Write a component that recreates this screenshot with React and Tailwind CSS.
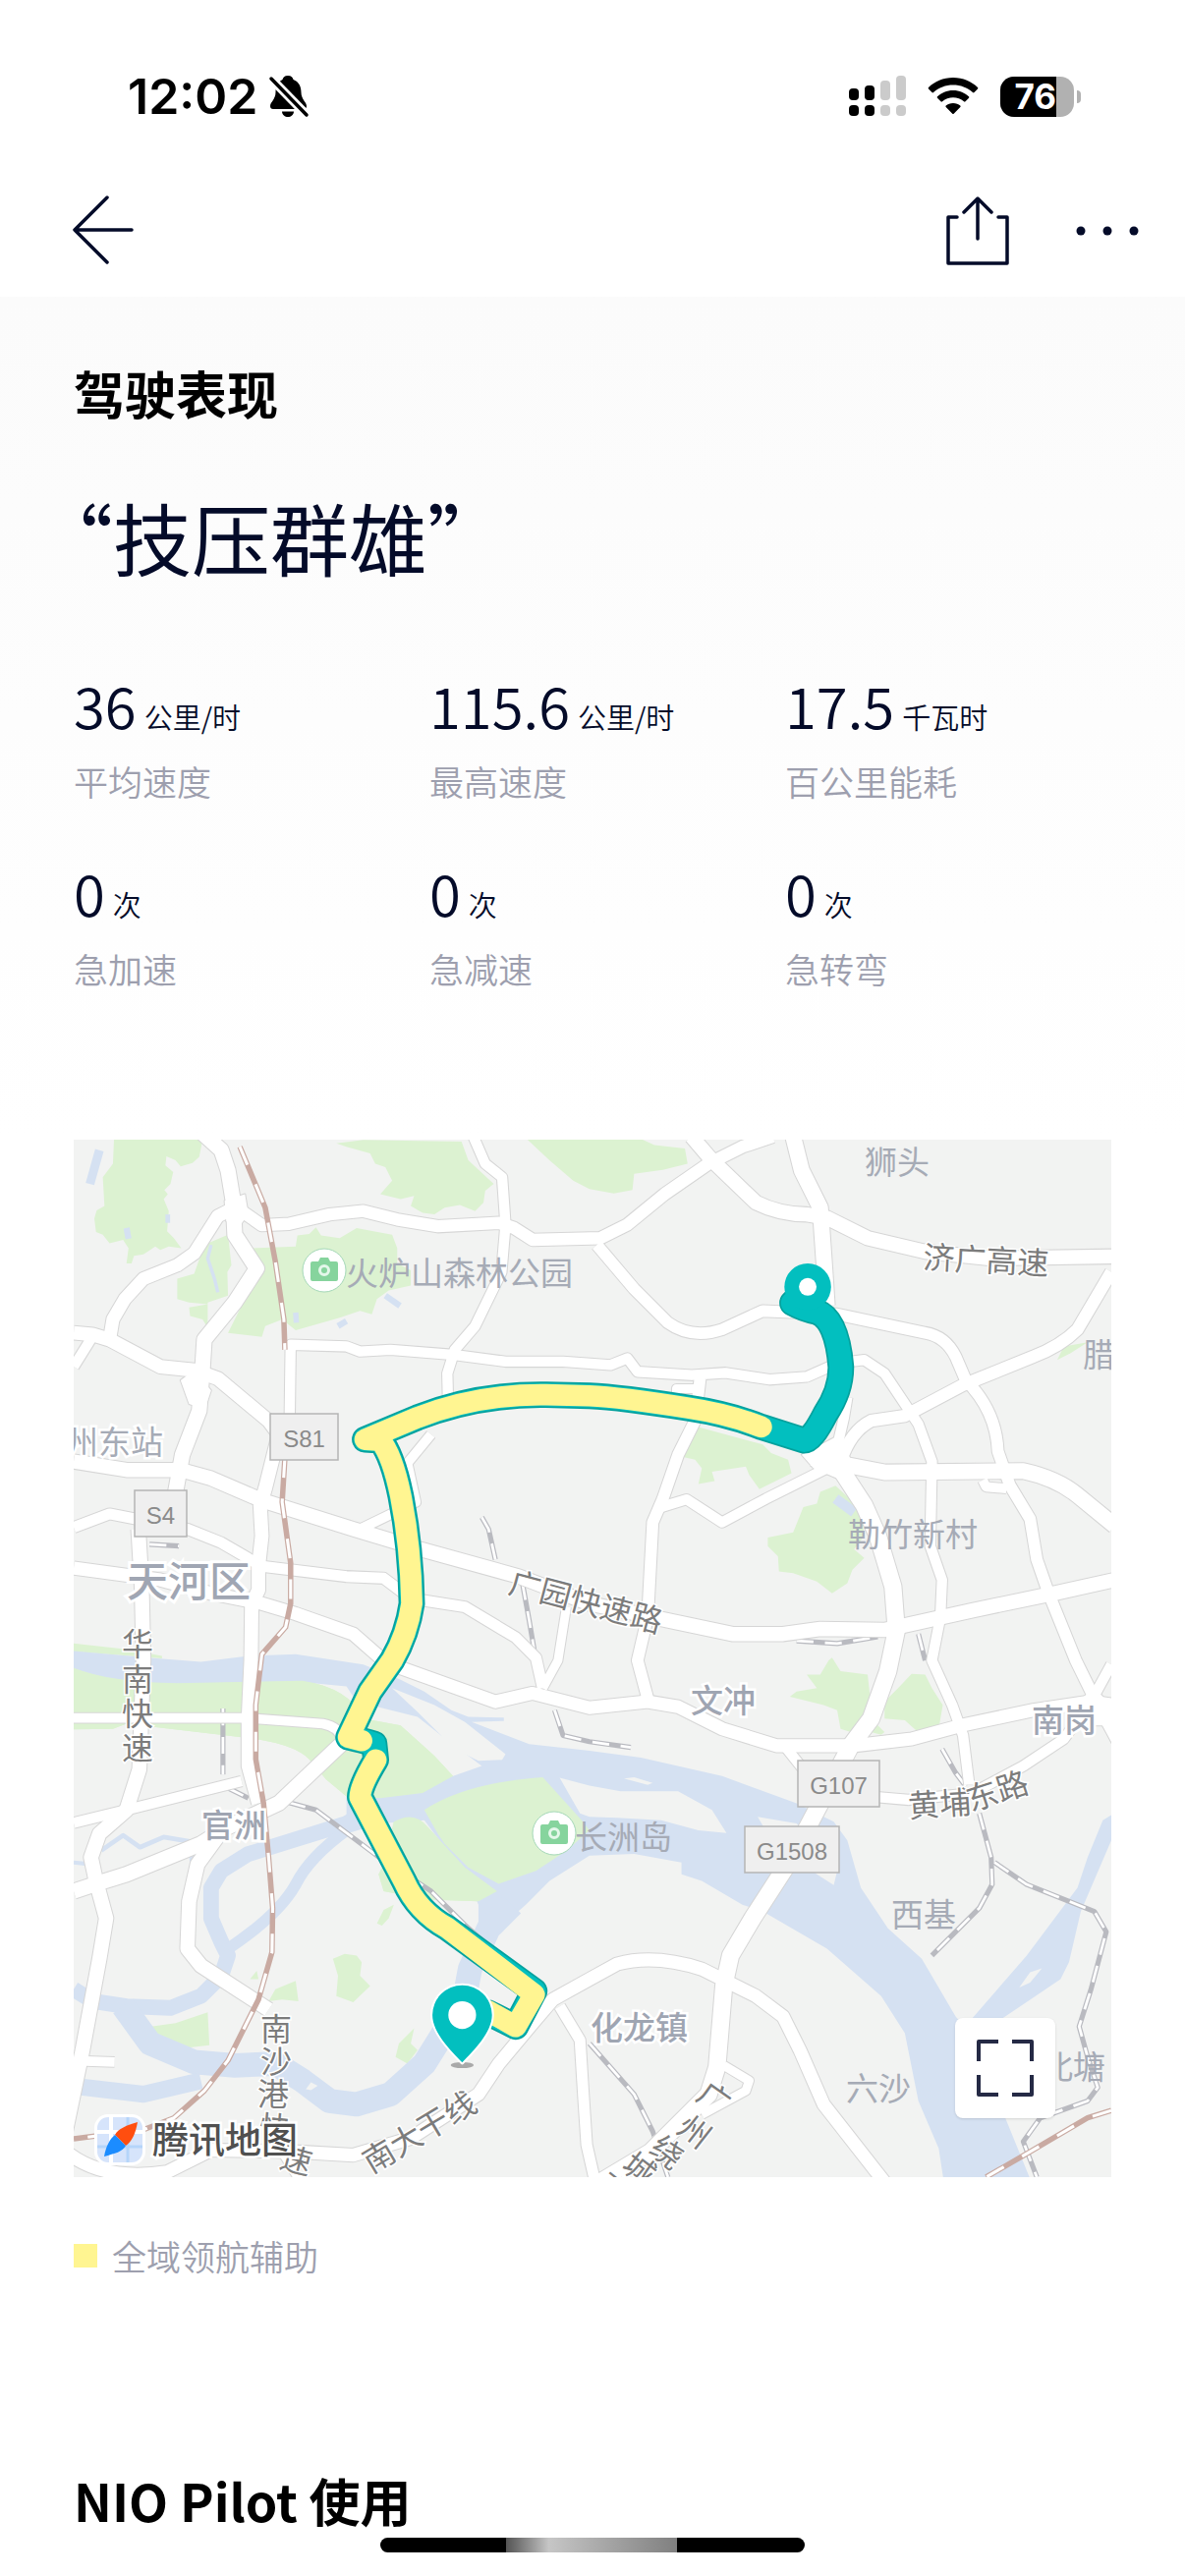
const stats = [
  { label: "平均速度", value: "36", unit: "公里/时" },
  { label: "最高速度", value: "115.6", unit: "公里/时" },
  { label: "百公里能耗", value: "17.5", unit: "千瓦时" },
  { label: "急加速", value: "0", unit: "次" },
  { label: "急减速", value: "0", unit: "次" },
  { label: "急转弯", value: "0", unit: "次" },
];

// Map geometry lives in its own units: the viewport is 3066 x 3066, starting at 44,29
const greens = [
  "M163,29 L425,29 415,80 395,98 360,108 345,90 318,78 315,105 338,125 330,160 312,178 322,190 310,205 325,240 320,300 340,320 362,350 325,345 300,355 285,345 250,368 222,372 215,395 200,395 206,350 190,325 150,335 130,310 110,302 105,262 112,238 135,225 130,140 160,100 Z",
  "M430,340 L500,310 510,400 498,420 500,490 440,510 440,585 425,560 388,550 385,525 440,515 385,510 350,500 350,440 400,425 Z",
  "M500,600 L600,612 610,580 660,560 700,592 830,555 890,535 925,545 940,500 975,475 1040,460 1040,415 1000,395 1000,350 985,310 930,300 880,290 830,320 775,312 760,288 740,308 705,312 700,345 570,350 600,400 Z",
  "M820,40 L900,30 1190,35 1210,90 1285,160 1260,180 1255,215 1230,240 1185,222 1140,230 1110,250 1075,245 1040,225 1050,195 1010,205 950,190 985,150 965,110 935,100 920,70 850,50 Z",
  "M1385,29 L1725,29 1760,45 1850,55 1858,100 1785,118 1700,130 1695,178 1640,188 1568,175 1520,150 1450,90 Z",
  "M1860,870 L2080,930 2105,955 2155,975 2165,1015 2070,1062 2040,1020 2030,995 1930,1010 1938,1038 1890,1047 1900,1000 1880,975 1838,965 Z",
  "M2250,1070 L2295,1052 2370,1120 2380,1200 2350,1240 2380,1265 2345,1300 2330,1340 2285,1370 2240,1335 2170,1310 2128,1305 2125,1260 2095,1230 2095,1205 2170,1190 2200,1115 2240,1105 Z",
  "M2210,1610 L2250,1610 2275,1568 2285,1560 2310,1600 2390,1610 2400,1700 2340,1780 2310,1770 2300,1715 2260,1700 2160,1675 2180,1660 2240,1650 Z",
  "M2440,1690 L2480,1650 2520,1608 2560,1610 2580,1650 2612,1700 2600,1770 2550,1790 2500,1745 2440,1740 Z",
  "M2400,1780 L2415,1755 2440,1780 2430,1788 Z",
  "M44,1518 L200,1535 305,1555 305,1562 44,1542 Z",
  "M44,1590 Q150,1632 350,1635 L720,1628 Q860,1650 900,1740 L1010,1760 1110,1850 1165,1910 1075,1960 950,1975 850,1970 790,1920 740,1860 Q690,1810 540,1795 L200,1755 160,1770 44,1772 Z",
  "M1080,2010 Q1200,1930 1430,1913 L1545,2040 1568,2070 1500,2130 1410,2190 1300,2228 1210,2180 1140,2110 1120,2080 Z",
  "M990,2045 Q1050,2010 1090,2060 L1200,2180 1295,2250 1240,2280 1090,2275 960,2250 945,2200 960,2170 Z",
  "M810,2450 L845,2435 880,2440 895,2460 890,2500 920,2530 870,2578 820,2560 825,2500 Z",
  "M272,2650 L345,2640 440,2608 445,2705 360,2715 290,2680 Z",
  "M620,2575 L640,2540 700,2515 708,2575 660,2570 Z",
  "M995,2740 L1005,2700 1050,2655 1040,2700 1060,2720 1030,2760 Z",
  "M940,2345 L960,2305 990,2290 975,2330 955,2352 Z",
  "M565,2510 L585,2485 590,2510 Z",
  "M2950,680 L2970,640 3040,628 2990,660 Z",
];

const rivers = [
  "M44,1540 L290,1562 420,1572 560,1555 700,1550 900,1580 1010,1625 1080,1660 1160,1715 1210,1735 1315,1737 1315,1747 1220,1750 1390,1815 1568,1835 1720,1855 1960,1910 2180,1990 2290,2045 2330,2100 2370,2240 2450,2360 2550,2450 2650,2620 2720,2700 2798,2923 2868,3095 2613,3095 2600,3010 2540,2870 2500,2670 2430,2560 2270,2420 2080,2310 2020,2290 1900,2220 1840,2200 1840,2165 1700,2140 1568,2145 1450,2220 1380,2290 1300,2360 1240,2380 1240,2290 1200,2200 1080,2040 950,2050 850,2080 850,1970 940,1960 1165,1910 1250,1880 1130,1790 1060,1735 880,1690 850,1645 700,1630 350,1637 180,1635 44,1592 Z",
  "M3110,2025 L3085,2040 3040,2150 3010,2240 2860,2440 2700,2625 2690,2700 2790,2625 2960,2510 2985,2460 3020,2310 3110,2100 Z",
];

const streams = [
  { d: "M950,1990 L850,2050 690,2100 560,2140 480,2190 450,2240 450,2330 480,2400 500,2440 480,2500 420,2560 330,2595 200,2590 100,2575 44,2540", w: 46 },
  { d: "M850,2070 Q740,2150 700,2230 Q650,2320 500,2420", w: 34 },
  { d: "M190,2590 L270,2700 400,2755 520,2765 640,2760 720,2810 800,2870 880,2880 980,2850 1080,2760 1130,2680 1200,2560 1215,2480 1270,2360 1340,2290", w: 72 },
  { d: "M60,2828 L250,2850 420,2810", w: 50 },
  { d: "M125,2130 L190,2085 240,2120 310,2090 400,2105", w: 14 },
  { d: "M395,2140 L402,2190", w: 22 },
  { d: "M44,2165 L90,2170", w: 12 },
  { d: "M120,60 L92,160", w: 26 },
  { d: "M450,340 L440,380 460,440 470,480", w: 10 },
  { d: "M965,490 L1008,520", w: 18 },
  { d: "M825,580 L850,565", w: 18 },
  { d: "M200,290 L206,322", w: 18 },
  { d: "M322,250 L322,275", w: 14 },
  { d: "M700,540 L702,570", w: 16 },
  { d: "M2295,1090 L2350,1130", w: 30 },
];

const islands = [
  "M985,1650 L1110,1700 1200,1750 1320,1845 1310,1862 1240,1865 1150,1820 1130,1790 1060,1720 Z",
  "M1480,1915 L1568,1938 1660,1955 1830,1955 1930,2010 1973,2078 1890,2070 1780,2040 1650,2033 1568,2030 1540,2020 Z",
  "M1670,1917 L1700,1913 1755,1930 1740,1936 Z",
  "M2065,2030 L2180,2050 2300,2190 2290,2232 2240,2200 2100,2090 Z",
  "M2838,2535 L2870,2490 2905,2478 2870,2520 Z",
  "M730,2835 L745,2815 765,2825 745,2838 Z",
];

const roads = [
  { w: 28, d: "M80,2752 L165,2755" },
  { w: 30, d: "M44,700 L100,610" },
  { w: 28, d: "M1100,900 L1030,985 1055,1100 890,1180" },
  { w: 38, d: "M500,240 L470,255 400,365 350,400 250,440 195,500 160,560 150,620" },
  { w: 36, d: "M540,240 L600,282 680,278 800,250 900,240 1000,265 1120,285 1300,275 1345,290 1400,325 1600,320 1680,280 1790,190 1920,100 2020,50 2110,20" },
  { w: 30, d: "M1225,20 L1260,100 1310,140 1320,280 1308,420 1230,580 1170,650 1148,720 1150,800" },
  { w: 30, d: "M682,860 L685,635 850,640 890,655 980,650 1170,665 1320,685 1490,685 1630,695 1680,675 1710,715 1870,725 1970,718 2100,738 2210,730 2300,690 2380,680 2440,720 2540,870 2580,980 2575,1230 2610,1330 2605,1440 2580,1568 2640,1700 2672,1790 2690,1935" },
  { w: 34, d: "M1895,735 L1880,860 1830,960 1785,1090 1755,1160 1740,1440 1710,1568 1740,1680" },
  { w: 26, d: "M1880,765 L1825,765 1825,800" },
  { w: 30, d: "M1780,1115 L1855,1092 1960,1160 2090,1090 2270,1000" },
  { w: 34, d: "M1590,340 L1700,470 1800,570 Q1870,620 1960,590 L2080,535 2300,545 2560,600 Q2620,610 2650,670 L2680,740 Q2770,830 2775,950 L2810,1050 2870,1150 2890,1270 2925,1370 3005,1568 3060,1680 3130,1810" },
  { w: 36, d: "M3110,420 L3010,590 Q2960,640 2880,670 L2670,755 2500,845 2400,860 Q2340,890 2310,980" },
  { w: 28, d: "M2730,1035 L2740,1055 2800,1060" },
  { w: 46, d: "M2225,970 L2300,985 2440,1012 2850,1008 Q2950,1030 3010,1080 L3120,1170" },
  { w: 46, d: "M2170,20 L2195,120 2250,230 2262,400 2270,520" },
  { w: 30, d: "M2330,790 L2320,850 2290,980" },
  { w: 42, d: "M1870,20 L1930,90 2060,215 Q2130,250 2210,250 L2270,260 2390,320 2560,360 2750,380 3120,374" },
  { w: 50, d: "M2295,980 L2380,1110 2420,1200 2465,1350 2475,1480 2450,1600 2400,1740 2340,1820 2250,1990 2160,2160 2050,2330 1985,2440 1965,2530 1945,2770 1920,2850 1750,3020 1600,3110" },
  { w: 26, d: "M1965,2765 L2040,2810 2030,2840 1900,2910" },
  { w: 42, d: "M44,980 L200,1005 360,1005 450,1030 600,1095 870,1180 1070,1240 1360,1320 1568,1400 1800,1450 1990,1490 2140,1490 2250,1475 2440,1478 2520,1460 2700,1420 2940,1370 3120,1330" },
  { w: 32, d: "M44,1175 L150,1135 380,1180 480,1220 600,1290 850,1320 960,1325 1040,1385 1200,1410 1350,1500 1410,1560 1430,1650" },
  { w: 38, d: "M44,1295 L300,1330 450,1370 600,1400 700,1430 870,1490 950,1560 1010,1590 1290,1690 1400,1665 1568,1708 1740,1690 1830,1705 1960,1770 2120,1820 2350,1820 2520,1800 2668,1760 2880,1715 3050,1690 3120,1700" },
  { w: 26, d: "M1500,1410 L1475,1568 1430,1650" },
  { w: 40, d: "M44,600 L100,605 150,620 300,700 400,710 470,735 620,860 650,900 610,1060 595,1110 600,1200 590,1290 590,1360 570,1400 568,1568 560,1740 560,1880 590,1990" },
  { w: 44, d: "M425,10 L480,60 500,120 515,210 520,310 585,410 520,510 430,620 425,700 415,830 365,960 345,1070" },
  { w: 28, d: "M44,1738 L550,1738 780,1755 Q830,1765 835,1800" },
  { w: 30, d: "M44,2048 L200,2010 540,1925" },
  { w: 42, d: "M235,1180 L245,1350 250,1568 238,1890 200,2010 120,2080 95,2150 110,2220 140,2330 120,2450 70,2720 20,2960" },
  { w: 44, d: "M44,2250 L120,2225 200,2200 420,2110 500,2060 650,1990 840,1810" },
  { w: 42, d: "M490,2060 L410,2170 385,2280 380,2420 420,2470 620,2600" },
  { w: 38, d: "M10,3010 Q120,3110 320,3080 L450,3015 700,3020 870,3030 1040,2980 1240,2850 1300,2760 1400,2640 1460,2570 1568,2510 1650,2465 Q1760,2435 1900,2480 L2060,2560 2140,2620 2190,2720 2260,2880 2440,3110" },
  { w: 32, d: "M1480,2590 L1540,2690 1550,2850 1560,3000 1585,3110" },
  { w: 30, d: "M2140,1815 L2200,1890 2280,1960 2510,1980 2700,1960 2850,1880 2970,1800 3050,1690 3110,1580" },
  { w: 26, d: "M660,3020 L715,3110" },
];

// Blobs of white where the big interchanges merge
const junctions = [
  "M400,710 L450,770 440,800 415,820 385,810 360,740 Z",
  "M2195,960 L2310,900 2350,1000 2300,1030 2230,1000 Z",
  "M490,210 L550,190 560,250 530,290 495,270 Z",
  "M3010,1690 L3060,1650 3110,1700 3110,1760 3060,1760 Z",
];

const brownRails = [
  "M535,50 L610,230 640,390 665,560 668,650",
  "M668,970 L660,1100 685,1280 685,1400 670,1470 600,1550 582,1700 582,1860 605,1990 620,2150 632,2300 630,2430 590,2570 500,2750 430,2840 340,2920 250,2955 44,2982",
  "M3110,2898 L3040,2920 2870,3020 2740,3095",
];

const greyRails = [
  "M1250,1145 L1270,1180 1290,1270",
  "M1370,1340 L1390,1450 1410,1568",
  "M1465,1715 L1490,1790 1568,1808 1690,1825",
  "M485,1710 L485,1905",
  "M500,1945 L560,1975",
  "M680,1988 L760,2010 940,2145 1100,2250 1200,2350 1290,2430",
  "M2720,2020 L2755,2150 2758,2230 2720,2300 2580,2440",
  "M2765,2165 L2860,2230 3060,2310 3095,2370 3050,2540 3015,2650 3040,2740 3070,2830 3040,2870 2900,2920 2850,2990 2890,3095",
  "M1568,2700 L1700,2850 1755,2960 1800,3095",
  "M2610,1830 L2650,1900 2680,1940",
  "M2180,1510 L2300,1518 2420,1498",
  "M2540,1490 L2560,1568",
  "M268,1225 L355,1230",
];

const driven =
  "M2200,480 L2168,512 Q2200,530 2240,538 Q2300,560 2311,700 Q2312,770 2265,840 Q2225,918 2203,918 L2076,878 Q1980,840 1860,822 Q1660,790 1568,786 L1440,783 Q1240,780 1060,850 L905,915 L950,918 Q985,960 1010,1080 Q1040,1230 1043,1400 Q1030,1490 985,1568 L920,1660 L856,1795 Q900,1805 932,1815 L937,1862 Q890,1940 890,1972 L1020,2220 Q1060,2310 1150,2360 L1405,2545 L1350,2650 L1270,2610";

const pilotParts = [
  "M2076,878 Q1980,840 1860,822 Q1660,790 1568,786 L1440,783 Q1240,780 1060,850 L905,915 L950,918 Q985,960 1010,1080 Q1040,1230 1043,1400 Q1030,1490 985,1568 L920,1660 L856,1795 L895,1805",
  "M937,1862 Q890,1940 890,1972 L1020,2220 Q1060,2310 1150,2360 L1405,2555 L1350,2650 L1270,2605",
];

// Label positions are in map pixels (1056 wide)
const places = [
  { t: "火炉山森林公园", x: 277, y: 148 },
  { t: "狮头", x: 805, y: 35 },
  { t: "腊", x: 1027, y: 231 },
  { t: "州东站", x: -8, y: 320, halo: true },
  { t: "勒竹新村", x: 788, y: 414 },
  { t: "长洲岛", x: 510, y: 722 },
  { t: "西基", x: 832, y: 801 },
  { t: "六沙", x: 786, y: 978 },
  { t: "北塘", x: 984, y: 956 },
  { t: "文冲", x: 628, y: 583, halo: true, bold: true },
  { t: "南岗", x: 975, y: 603, halo: true, bold: true },
  { t: "官洲", x: 130, y: 710, halo: true, bold: true },
  { t: "化龙镇", x: 526, y: 916, halo: true, bold: true },
];

const roadNames = [
  { t: "济广高速", x: 864, y: 131, r: 3 },
  { t: "广园快速路", x: 441, y: 461, r: 15 },
  { t: "黄埔", x: 850, y: 690, r: -4 },
  { t: "东路", x: 913, y: 684, r: -18 },
  { t: "南大干线", x: 303, y: 1053, r: -31 },
  { t: "华", x: 49, y: 525 },
  { t: "南", x: 49, y: 561 },
  { t: "快", x: 49, y: 596 },
  { t: "速", x: 49, y: 631 },
  { t: "南", x: 190, y: 917 },
  { t: "沙", x: 190, y: 950 },
  { t: "港", x: 187, y: 983 },
  { t: "快", x: 188, y: 1016, r: 5 },
  { t: "速", x: 208, y: 1046, r: 15 },
  { t: "广", x: 632, y: 976, r: 35 },
  { t: "州", x: 612, y: 1009, r: 38 },
  { t: "绕", x: 584, y: 1030, r: 38 },
  { t: "城", x: 556, y: 1047, r: 38 },
  { t: "高", x: 530, y: 1068, r: 38 },
];

const shields = [
  { t: "S81", x: 200, y: 279, w: 69 },
  { t: "S4", x: 62, y: 357, w: 53 },
  { t: "G107", x: 737, y: 632, w: 83 },
  { t: "G1508", x: 683, y: 699, w: 96 },
];

function StatusBar() {
  return (
    <div className="flex h-[166px] items-center justify-between pt-[30px] pr-[106px] pl-[130px]">
      <div className="flex items-center gap-[11px]">
        <span className="font-['Inter'] text-[50px] leading-[60px] font-semibold text-black">12:02</span>
        <svg className="h-[44px] w-[42px]" viewBox="0 0 42 44" aria-hidden="true">
          <path d="M20 1C23.500 1 25 3 25.500 5C31 7 33.500 12 33.500 18C33.500 25 39 28 39 32C39 34 38 35 36 35H5C3 35 2 34 2 32C2 28 7.500 25 7.500 18C7.500 12 10 7 14.500 5C15 3 16.500 1 20 1Z" />
          <path d="M14 37.500H26C26 41 23 43 20 43S14 41 14 37.500Z" />
          <path d="M2 3L40 42" stroke="#fff" strokeWidth="9" />
          <path d="M3 4L39 41" stroke="#000" strokeWidth="3.500" strokeLinecap="round" />
        </svg>
      </div>
      <div className="flex items-center">
        <svg className="mr-[22px] h-[42px] w-[58px]" viewBox="0 0 58 42" aria-hidden="true">
          <rect x="0" y="13" width="10" height="12" rx="4" />
          <rect x="16" y="10" width="10" height="15" rx="4" />
          <rect x="0" y="30" width="10" height="11" rx="4" />
          <rect x="16" y="30" width="10" height="11" rx="4" />
          <g fill="#cbcbcb">
            <rect x="32" y="5" width="10" height="20" rx="4" />
            <rect x="48" y="0" width="10" height="25" rx="4" />
            <rect x="32" y="30" width="10" height="11" rx="4" />
            <rect x="48" y="30" width="10" height="11" rx="4" />
          </g>
        </svg>
        <svg className="mr-[22px] h-[38px] w-[52px]" viewBox="0 0 52 38" aria-hidden="true">
          <path d="M26 0C36 0 45 4 51 10C51.500 10.500 51.500 11 51 11.500L47.500 15C47 15.500 46.500 15.500 46 15C40.500 10 33.500 7.500 26 7.500S11.500 10 6 15C5.500 15.500 5 15.500 4.500 15L1 11.500C.5 11 .5 10.500 1 10C7 4 16 0 26 0Z" />
          <path d="M26 13C32.500 13 38 15.500 42 19.300C42.500 19.800 42.500 20.300 42 20.800L38.500 24.300C38 24.800 37.500 24.800 37 24.300C34 21.700 30 20.300 26 20.300S18 21.700 15 24.300C14.500 24.800 14 24.800 13.500 24.300L10 20.800C9.500 20.300 9.500 19.800 10 19.300C14 15.500 19.500 13 26 13Z" />
          <path d="M26 26C29 26 31.500 27 33.300 28.500C33.800 29 33.800 29.500 33.300 30L26.700 36.700C26.300 37.100 25.700 37.100 25.300 36.700L18.700 30C18.200 29.500 18.200 29 18.700 28.500C20.500 27 23 26 26 26Z" />
        </svg>
        <div className="h-[41px] w-[75px] overflow-hidden rounded-[14px] bg-[#b1b1b1]">
          <div className="flex h-full w-[57px] items-center justify-end bg-black font-['Inter'] text-[35px] leading-[41px] font-bold text-white">
            76
          </div>
        </div>
        <div className="ml-[3px] h-[13px] w-[4px] rounded-r-full bg-[#b1b1b1]" />
      </div>
    </div>
  );
}

function TopNav() {
  return (
    <header className="flex h-[136px] items-center justify-between pr-[46px] pl-[73px]">
      <button type="button" aria-label="返回">
        <svg className="h-[70px] w-[64px]" viewBox="0 0 64 70" fill="none" stroke="#040b29" strokeWidth="3.500" strokeLinecap="round" strokeLinejoin="round">
          <path d="M36 2L3 35L36 68M3 35H61" />
        </svg>
      </button>
      <div className="flex items-center gap-[66px]">
        <button type="button" aria-label="分享">
          <svg className="h-[72px] w-[66px]" viewBox="0 0 66 72" fill="none" stroke="#040b29" strokeWidth="3.500" strokeLinecap="round" strokeLinejoin="round">
            <path d="M12 23H3V70H63V23H54M33 4V45M19 18L33 4L47 18" />
          </svg>
        </button>
        <button type="button" aria-label="更多">
          <svg className="h-[40px] w-[66px]" viewBox="0 0 66 40" fill="#040b29">
            <circle cx="6" cy="21" r="4.500" />
            <circle cx="33" cy="21" r="4.500" />
            <circle cx="60" cy="21" r="4.500" />
          </svg>
        </button>
      </div>
    </header>
  );
}

function Stat({ value, unit, label }) {
  return (
    <div>
      <dd className="flex h-[60px] items-baseline gap-[8px] leading-[60px] text-[#040b29]">
        <span className="text-[58px] font-[350]">{value}</span>
        <span className="text-[29px] font-[350]">{unit}</span>
      </dd>
      <dt className="mt-[26px] text-[35px] leading-[44px] font-[350] text-[#9d9fae]">{label}</dt>
    </div>
  );
}

function CameraPin({ x, y }) {
  return (
    <g transform={`translate(${x} ${y})`}>
      <circle r="22" fill="#fff" stroke="#a5d8b8" strokeWidth="1" />
      <path d="M-14 -7Q-14 -9 -12 -9H-6L-4 -13H4L6 -9H12Q14 -9 14 -7V9Q14 11 12 11H-12Q-14 11 -14 9Z" fill="#86d49d" />
      <circle r="4.500" fill="none" stroke="#e4f7ea" strokeWidth="3" />
    </g>
  );
}

function RouteMap() {
  return (
    <svg className="block w-full" viewBox="0 0 1056 1056" role="img" aria-label="行程地图">
      <rect width="1056" height="1056" fill="#f2f3f2" />
      <g transform="scale(.34442) translate(-44 -29)" fill="none" strokeLinejoin="round">
        <g fill="#dcf2d1">
          {greens.map((d) => <path key={d} d={d} />)}
        </g>
        <g fill="#d5e1f2">
          {rivers.map((d) => <path key={d} d={d} />)}
        </g>
        <g stroke="#d5e1f2">
          {streams.map((s) => <path key={s.d} d={s.d} strokeWidth={s.w} />)}
        </g>
        <g fill="#f2f3f2">
          {islands.map((d) => <path key={d} d={d} />)}
        </g>
        {/* the island parks and the belt sit on top of the river shape */}
        <g fill="#dcf2d1">
          {greens.slice(11, 14).map((d) => <path key={d} d={d} />)}
        </g>
        <g stroke="#b9bac0" strokeWidth="15">
          {greyRails.map((d) => <path key={d} d={d} />)}
        </g>
        <g stroke="#fff" strokeWidth="8" strokeDasharray="50 34">
          {greyRails.map((d) => <path key={d} d={d} />)}
        </g>
        <g stroke="#d6d6d6">
          {roads.map((r) => <path key={r.d} d={r.d} strokeWidth={r.w + 6} />)}
          {junctions.map((d) => <path key={d} d={d} strokeWidth="6" />)}
        </g>
        <g stroke="#fff">
          {roads.map((r) => <path key={r.d} d={r.d} strokeWidth={r.w} />)}
        </g>
        <g fill="#fff">
          {junctions.map((d) => <path key={d} d={d} />)}
        </g>
        <g stroke="#c9aaa2" strokeWidth="16">
          {brownRails.map((d) => <path key={d} d={d} />)}
        </g>
        <g stroke="#fff" strokeWidth="9" strokeDasharray="58 62">
          {brownRails.map((d) => <path key={d} d={d} />)}
        </g>
      </g>

      <g fontFamily="'Noto Sans CJK SC', sans-serif">
        {places.map((p) => (
          <text
            key={p.t}
            x={p.x}
            y={p.y}
            fontSize="33"
            fontWeight={p.bold ? 500 : 400}
            fill={p.bold ? "#9fa5b2" : "#a6abb6"}
            stroke={p.halo ? "#fff" : "none"}
            strokeWidth="5"
            paintOrder="stroke"
          >
            {p.t}
          </text>
        ))}
        <text x="54" y="465" fontSize="42" fontWeight="500" fill="#a0a6b3" stroke="#fff" strokeWidth="6" paintOrder="stroke">
          天河区
        </text>
        {roadNames.map((n) => (
          <text
            key={`${n.t}${n.x}${n.y}`}
            fontSize="32"
            fill="#7c7c7c"
            stroke="#fff"
            strokeWidth="3"
            paintOrder="stroke"
            transform={`translate(${n.x} ${n.y}) rotate(${n.r || 0})`}
          >
            {n.t}
          </text>
        ))}
      </g>

      <g transform="scale(.34442) translate(-44 -29)" fill="none" strokeLinejoin="round" strokeLinecap="round">
        <path d={driven} stroke="#04a19d" strokeWidth="78" />
        <path d={driven} stroke="#02bfbf" strokeWidth="68" />
        <g stroke="#fff591" strokeWidth="63">
          {pilotParts.map((d) => <path key={d} d={d} />)}
        </g>
        <circle cx="2213" cy="464" r="69" fill="#02bfbf" />
        <circle cx="2213" cy="464" r="26" fill="#fff" />
        <ellipse cx="1192" cy="2764" rx="34" ry="9" fill="#a9a9a9" />
        <path d="M1192,2528 A88,88 0 0 1 1280,2616 C1280,2668 1225,2722 1192,2756 C1159,2722 1104,2668 1104,2616 A88,88 0 0 1 1192,2528 Z" fill="#02bfbf" stroke="#fff" strokeWidth="12" paintOrder="stroke" />
        <circle cx="1192" cy="2616" r="41" fill="#fff" />
      </g>

      {shields.map((s) => (
        <g key={s.t}>
          <rect x={s.x} y={s.y} width={s.w} height="47" fill="#efefef" stroke="#b5b5b5" strokeWidth="1.500" />
          <text x={s.x + s.w / 2} y={s.y + 34} textAnchor="middle" fontFamily="'Liberation Sans', Arial, sans-serif" fontSize="24" fill="#8a8a8a">
            {s.t}
          </text>
        </g>
      ))}
      <CameraPin x={255} y={133} />
      <CameraPin x={489} y={706} />

      {/* map provider */}
      <rect x="21" y="992" width="52" height="52" rx="14" fill="#fff" />
      <rect x="24" y="995" width="46" height="46" rx="11" fill="#d6e4fb" />
      <path d="M38 995V1041M24 1010H70" stroke="#fff" strokeWidth="4" />
      <path d="M55 995V1041M24 1025H70" stroke="#b5d5fa" strokeWidth="3" />
      <path d="M65 1000C54 1003 45 1007 42 1013L53 1024C59 1020 63 1012 65 1000Z" fill="#ff4e0f" />
      <path d="M31 1035C42 1032 50 1030 53 1024L42 1013C37 1017 33 1024 31 1035Z" fill="#1b8cff" />
      <text x="80" y="1032" fontFamily="'Noto Sans CJK SC', sans-serif" fontSize="37" fontWeight="500" fill="#505050" stroke="#fff" strokeWidth="5" paintOrder="stroke">
        腾讯地图
      </text>
    </svg>
  );
}

export default function App() {
  return (
    <div className="relative min-h-screen bg-white">
      <StatusBar />
      <TopNav />
      <main className="font-['Noto_Sans_CJK_SC',sans-serif]">
        <section className="bg-linear-to-b from-[#fbfbfb] to-white pt-[68px] pb-[152px] pl-[75px]">
          <h2 className="text-[52px] leading-[60px] font-bold text-black">驾驶表现</h2>
          <h1 className="mt-[67px] text-[80px] leading-[96px] text-[#040b29] [font-feature-settings:'halt']">
            “技压群雄”
          </h1>
          <dl className="mt-[94px] mr-[45px] grid grid-cols-3 gap-y-[61px]">
            {stats.map((s) => (
              <Stat key={s.label} {...s} />
            ))}
          </dl>
        </section>

        <section className="px-[75px]">
          <div className="relative">
            <RouteMap />
            <button
              type="button"
              aria-label="全屏"
              className="absolute right-[57px] bottom-[60px] flex h-[102px] w-[102px] items-center justify-center rounded-lg bg-white shadow-sm"
            >
              <svg className="h-[58px] w-[58px]" viewBox="0 0 58 58" fill="none" stroke="#252a45" strokeWidth="4" strokeLinejoin="round">
                <path d="M2 22V2H22M36 2H56V22M56 36V56H36M22 56H2V36" />
              </svg>
            </button>
          </div>
          <div className="mt-[58px] flex items-center gap-[15px] text-[35px] leading-[44px] font-[350] text-[#9d9fae]">
            <span className="h-[24px] w-[24px] bg-[#fff591]" />
            全域领航辅助
          </div>
          <h2 className="mt-[197px] text-[52px] leading-[60px] font-bold text-black">NIO Pilot 使用</h2>
        </section>
      </main>

      <div className="fixed inset-x-0 bottom-[24px] flex justify-center">
        <div className="flex h-[15px] w-[432px] overflow-hidden rounded-full bg-black">
          <div className="ml-[128px] w-[174px] bg-linear-to-r from-[#555555] from-0% via-[#c6c6c6] via-25% to-[#808080]" />
        </div>
      </div>
    </div>
  );
}
